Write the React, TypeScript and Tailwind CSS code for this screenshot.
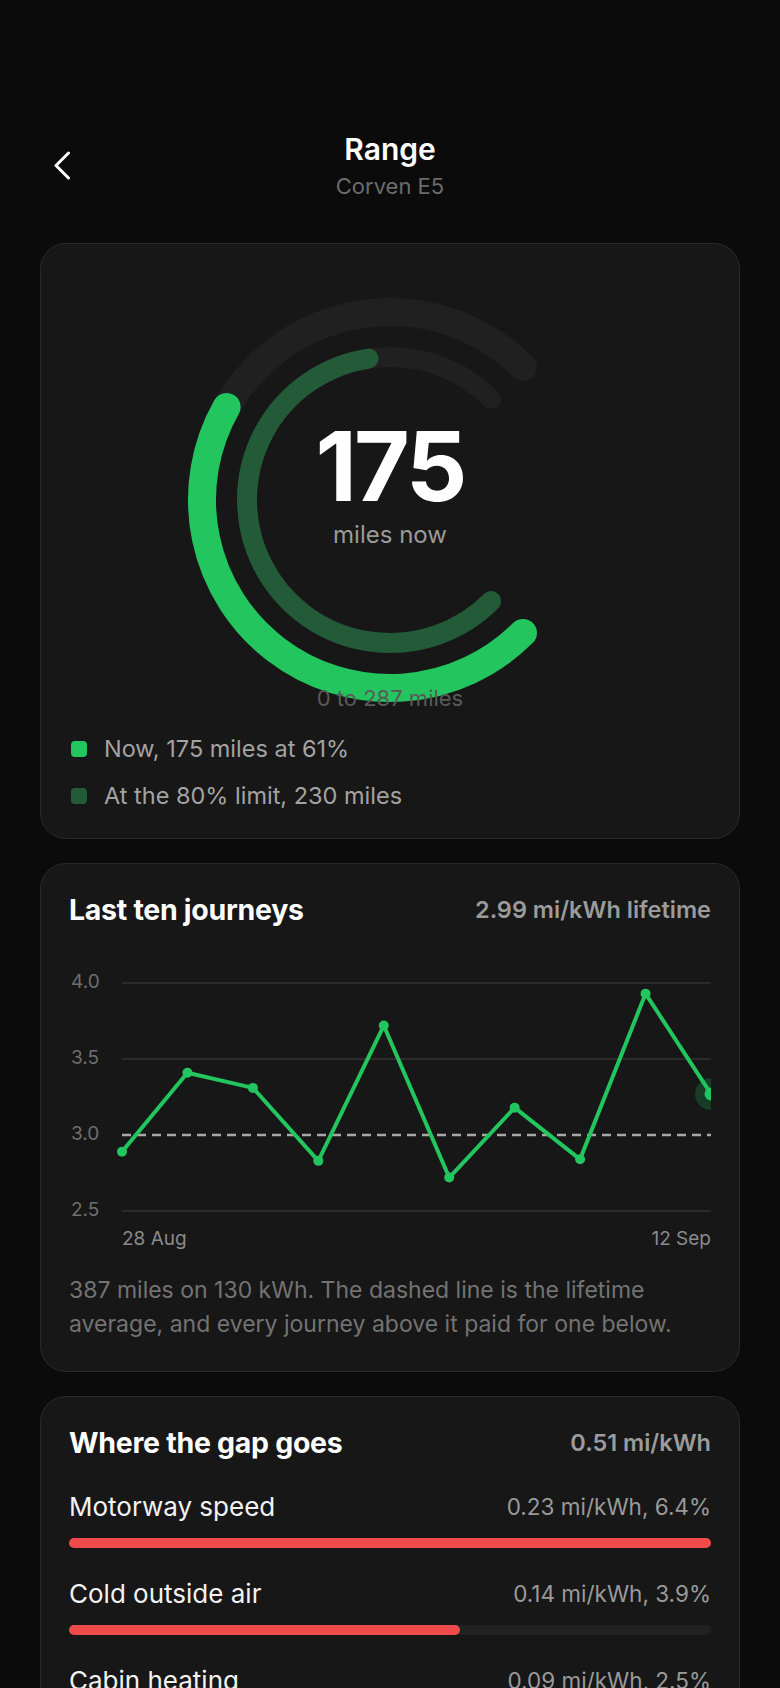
const FONT = "font-['Inter','Noto_Sans',sans-serif]";

// gauge geometry (svg local)
const CX = 220;
const CY = 220;

function pt(r: number, deg: number) {
  const a = (deg * Math.PI) / 180;
  return [CX + r * Math.cos(a), CY + r * Math.sin(a)];
}

function arc(r: number, from: number, to: number) {
  const [x1, y1] = pt(r, from);
  const [x2, y2] = pt(r, to);
  const large = to - from > 180 ? 1 : 0;
  return `M ${x1.toFixed(2)} ${y1.toFixed(2)} A ${r} ${r} 0 ${large} 1 ${x2.toFixed(2)} ${y2.toFixed(2)}`;
}

const START = 45;
const SWEEP = 270;

function Gauge() {
  const outerEnd = START + SWEEP * (175 / 287);
  const innerEnd = START + SWEEP * (230 / 287);
  return (
    <div className="relative mx-auto mt-2 h-[430px] w-[440px]">
      <svg width="440" height="430" viewBox="0 0 440 430">
        <path d={arc(188, START, START + SWEEP)} stroke="#202020" strokeWidth="28" fill="none" strokeLinecap="round" />
        <path d={arc(143, START, START + SWEEP)} stroke="#202020" strokeWidth="20" fill="none" strokeLinecap="round" />
        <path d={arc(143, START, innerEnd)} stroke="#235a37" strokeWidth="20" fill="none" strokeLinecap="round" />
        <path d={arc(188, START, outerEnd)} stroke="#22c55e" strokeWidth="28" fill="none" strokeLinecap="round" />
      </svg>
      <div className="absolute inset-x-0 top-[136px] flex flex-col items-center">
        <div className="text-[96px] font-bold leading-[100px] tracking-[-0.03em] text-white">175</div>
        <div className="mt-[7px] text-[24px] leading-6 text-[#9a9a9a]">miles now</div>
      </div>
      <div className="absolute inset-x-0 top-[404px] text-center text-[22px] leading-7 text-[#5a5a5a]">0 to 287 miles</div>
    </div>
  );
}

const journeys = [2.89, 3.41, 3.31, 2.83, 3.72, 2.72, 3.18, 2.84, 3.93, 3.27];

function JourneyChart() {
  const W = 642;
  const x0 = 53;
  const step = (W - x0) / 9;
  const y = (v: number) => 174 - (v - 3.0) * 152;
  const pts = journeys.map((v, i) => [x0 + i * step, y(v)]);
  const grid = [
    { v: "4.0", y: 22 },
    { v: "3.5", y: 98 },
    { v: "3.0", y: 174 },
    { v: "2.5", y: 250 },
  ];
  const last = pts[pts.length - 1];
  return (
    <svg width={W} height="262" viewBox={`0 0 ${W} 262`} className="mt-[33px] block" fontFamily="Inter, sans-serif">
      {grid.map((g) => (
        <g key={g.v}>
          <text x="2" y={g.y} dominantBaseline="middle" fontSize="19" fill="#6f6f6f">
            {g.v}
          </text>
          {g.v !== "3.0" && <line x1={x0} x2={W} y1={g.y} y2={g.y} stroke="#333333" strokeWidth="1.5" />}
        </g>
      ))}
      <line x1={x0} x2={W} y1="174" y2="174" stroke="#a8a8a8" strokeWidth="2.5" strokeDasharray="9 6" />
      <polyline
        points={pts.map((p) => p.join(",")).join(" ")}
        fill="none"
        stroke="#22c55e"
        strokeWidth="4"
        strokeLinejoin="round"
      />
      {pts.slice(0, -1).map((p, i) => (
        <circle key={i} cx={p[0]} cy={p[1]} r="5" fill="#22c55e" />
      ))}
      <circle cx={last[0]} cy={last[1]} r="16" fill="#22c55e" fillOpacity="0.22" />
      <circle cx={last[0]} cy={last[1]} r="6.5" fill="#22c55e" />
    </svg>
  );
}

const gaps = [
  { label: "Motorway speed", value: "0.23 mi/kWh, 6.4%", amount: 0.23 },
  { label: "Cold outside air", value: "0.14 mi/kWh, 3.9%", amount: 0.14 },
  { label: "Cabin heating", value: "0.09 mi/kWh, 2.5%", amount: 0.09 },
];

function Card({ children, className = "" }: { children: React.ReactNode; className?: string }) {
  return (
    <div className={`mx-10 rounded-[26px] border border-[#2a2a2a] bg-[#171717] px-7 pt-7 ${className}`}>{children}</div>
  );
}

function CardHeader({ title, meta }: { title: string; meta: string }) {
  return (
    <div className="flex items-center justify-between">
      <h2 className="text-[28.5px] font-bold leading-9 tracking-[-0.01em] text-white">{title}</h2>
      <span className="text-[23.5px] font-semibold leading-9 text-[#9b9b9b]">{meta}</span>
    </div>
  );
}

export default function App() {
  return (
    <div className={`min-h-screen bg-[#0b0b0b] pb-10 ${FONT}`}>
      <header className="grid grid-cols-[1fr_auto_1fr] items-center pt-[131px]">
        <div className="pl-[53px]">
          <svg width="20" height="30" viewBox="0 0 20 30" fill="none">
            <polyline points="15.5,2 3,14.5 15.5,27" stroke="white" strokeWidth="3" strokeLinecap="round" strokeLinejoin="round" />
          </svg>
        </div>
        <div className="flex flex-col items-center">
          <h1 className="text-[30px] font-semibold leading-[36px] text-white">Range</h1>
          <p className="mt-[5px] text-[22px] leading-7 text-[#6b6b6b]">Corven E5</p>
        </div>
        <div />
      </header>

      <div className="mt-[43px] flex flex-col gap-6">
        <Card className="pb-7">
          <Gauge />
          <div className="mt-[25px] flex flex-col gap-[19px]">
            <div className="flex items-center gap-[17px]">
              <span className="ml-[2px] h-4 w-4 rounded-[4px] bg-[#22c55e]" />
              <span className="text-[23.5px] leading-7 text-[#a3a3a3]">Now, 175 miles at 61%</span>
            </div>
            <div className="flex items-center gap-[17px]">
              <span className="ml-[2px] h-4 w-4 rounded-[4px] bg-[#235a37]" />
              <span className="text-[23.5px] leading-7 text-[#a3a3a3]">At the 80% limit, 230 miles</span>
            </div>
          </div>
        </Card>

        <Card className="pb-[30px]">
          <CardHeader title="Last ten journeys" meta="2.99 mi/kWh lifetime" />
          <JourneyChart />
          <div className="mt-1 flex justify-between pl-[53px] text-[19px] leading-6 text-[#8a8a8a]">
            <span>28 Aug</span>
            <span>12 Sep</span>
          </div>
          <p className="mt-[22px] text-[23px] leading-[34px] text-[#737373]">
            387 miles on 130 kWh. The dashed line is the lifetime average, and every journey above it paid for one below.
          </p>
        </Card>

        <Card className="pb-7">
          <CardHeader title="Where the gap goes" meta="0.51 mi/kWh" />
          <div className="flex flex-col">
            {gaps.map((g) => (
              <div key={g.label} className="mt-[31px]">
                <div className="flex items-center justify-between">
                  <span className="text-[26px] leading-[30px] text-[#f2f2f2]">{g.label}</span>
                  <span className="text-[22.5px] leading-[30px] text-[#9a9a9a]">{g.value}</span>
                </div>
                <div className="mt-4 h-[10px] w-full rounded-full bg-[#222222]">
                  <div className="h-full rounded-full bg-[#f04b4b]" style={{ width: `${(g.amount / 0.23) * 100}%` }} />
                </div>
              </div>
            ))}
          </div>
        </Card>
      </div>
    </div>
  );
}
